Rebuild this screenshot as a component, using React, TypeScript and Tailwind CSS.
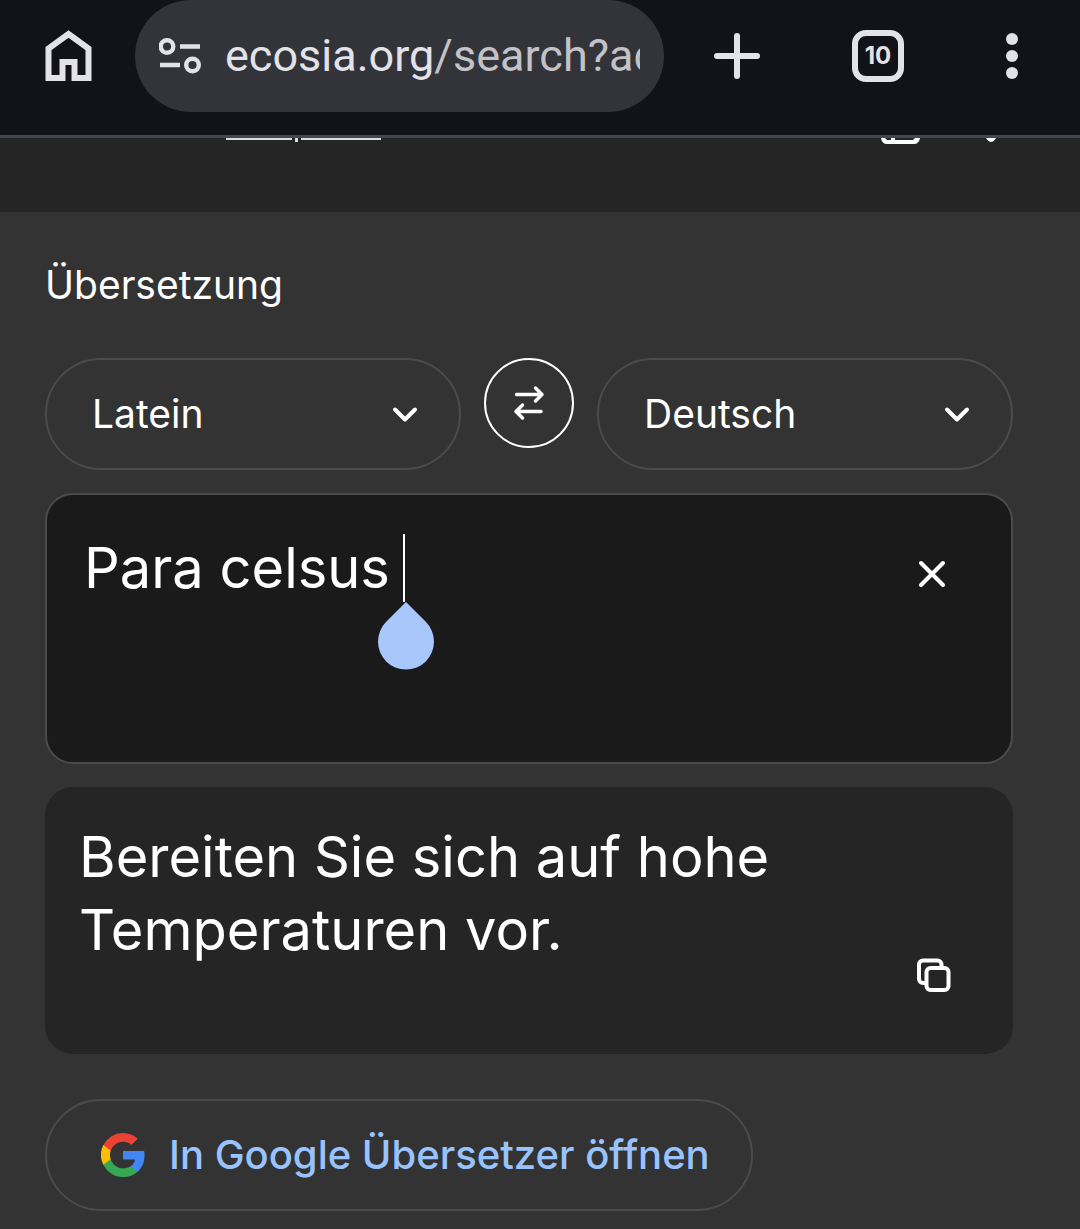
import { ReactNode } from "react";

const LANGUAGES = ["Latein", "Deutsch", "Englisch", "Französisch"];

function LanguageSelect({ id, label, value }: { id: string; label: string; value: string }) {
  return (
    <div className="relative flex-1 min-w-0">
      <label htmlFor={id} className="sr-only">{label}</label>
      <select
        id={id}
        defaultValue={value}
        className="w-full h-28 appearance-none rounded-full border-2 border-[#4b4b4b] bg-transparent pl-[45px] pr-24 text-[39px] text-white"
      >
        {LANGUAGES.map((language) => (
          <option key={language}>{language}</option>
        ))}
      </select>
      <svg className="pointer-events-none absolute right-10 top-10 size-8" viewBox="0 0 32 32" fill="none" stroke="white" strokeWidth="4" strokeLinecap="round" strokeLinejoin="round">
        <path d="M6 11.500l10 10L26 11.500" />
      </svg>
    </div>
  );
}

function IconButton({ label, className, children }: { label: string; className: string; children: ReactNode }) {
  return (
    <button type="button" aria-label={label} className={className}>
      {children}
    </button>
  );
}

function BrowserBar() {
  return (
    <header className="flex items-start border-b-3 border-[#46464f] bg-[#121318] pb-[23px] text-[#e3e2e9]">
      <div className="flex h-28 w-[135px] shrink-0 items-center justify-center">
        <IconButton label="Startseite" className="size-16">
          <svg viewBox="0 0 64 64" className="size-16" fill="none" stroke="currentColor" strokeWidth="6">
            <path d="M12.500 54V24.500L32.500 10L52.500 24.500V54H38.500V38H26.500V54Z" />
          </svg>
        </IconButton>
      </div>
      <div className="flex h-28 min-w-0 flex-1 items-center gap-6 rounded-full bg-[#33343a] px-6">
        <svg viewBox="0 0 42 36" className="h-9 w-[42px] shrink-0" fill="none" stroke="currentColor" strokeWidth="4.400">
          <circle cx="8" cy="8.500" r="6.300" />
          <path d="M21 8.500h20M1 27h20" />
          <circle cx="33.500" cy="27" r="6.300" />
        </svg>
        <p className="min-w-0 flex-1 overflow-hidden whitespace-nowrap font-['Roboto',sans-serif] text-[45px] leading-[64px]">
          ecosia.org<span className="text-[#c2c2c7]">/search?ad</span>
        </p>
      </div>
      <div className="flex h-28 w-[416px] shrink-0 items-center">
        <IconButton label="Neuer Tab" className="ml-12 size-[50px]">
          <svg viewBox="0 0 50 50" className="size-[50px]" stroke="currentColor" strokeWidth="6" strokeLinecap="round">
            <path d="M25 5v40M5 25h40" />
          </svg>
        </IconButton>
        <IconButton label="Tabs" className="ml-[90px] flex size-[52px] items-center justify-center rounded-[14px] border-6 border-current text-[24px] font-bold">
          10
        </IconButton>
        <IconButton label="Mehr" className="ml-[83px] size-[50px]">
          <svg viewBox="0 0 50 50" className="size-[50px]" fill="currentColor">
            <circle cx="25" cy="8" r="6" />
            <circle cx="25" cy="25" r="6" />
            <circle cx="25" cy="42" r="6" />
          </svg>
        </IconButton>
      </div>
    </header>
  );
}

// bottom edge of the page header that is scrolled away under the browser bar
function ScrolledHeader() {
  return (
    <div className="flex h-[74px] items-start justify-between bg-[#252525] pl-[226px] pr-[83px]">
      <svg viewBox="0 0 155 6" className="h-1.5 w-[155px]" fill="#dcdcdc">
        <path d="M0 0h66v2H0zM69 0h3v4h-3zM75 0h80v2H75z" />
      </svg>
      <svg viewBox="0 0 116 6" className="h-1.5 w-[116px]" fill="white">
        <path d="M0 0h4l2 2h4V0h4v2h18l2-2h5q-1 6-6 6H6Q1 6 0 0z" />
        <path d="M105 0h10q-5 8-10 0z" />
      </svg>
    </div>
  );
}

export default function App() {
  return (
    <div className="min-h-screen bg-[#333333] font-['Inter',sans-serif] text-white">
      <BrowserBar />
      <ScrolledHeader />
      <main className="pb-[18px] pl-[45px] pr-[67px] pt-[45px]">
        <h1 className="text-[39px] leading-[56px]">Übersetzung</h1>
        <div className="mt-[45px] flex items-start gap-[23px]">
          <LanguageSelect id="from" label="Ausgangssprache" value="Latein" />
          <IconButton label="Sprachen tauschen" className="flex size-[90px] shrink-0 items-center justify-center rounded-full border-2 border-white">
            <svg viewBox="0 0 36 36" className="size-9" fill="none" stroke="white" strokeWidth="3.500" strokeLinecap="round" strokeLinejoin="round">
              <path d="M5.500 9.500H31M24.500 3l6.500 6.500l-6.500 6.500M30 26.500H5M11.500 20L5 26.500l6.500 6.500" />
            </svg>
          </IconButton>
          <LanguageSelect id="to" label="Zielsprache" value="Deutsch" />
        </div>
        <div className="relative mt-[23px]">
          <label htmlFor="source" className="sr-only">Text eingeben</label>
          <textarea
            id="source"
            defaultValue="Para celsus "
            className="block h-[271px] w-full resize-none rounded-[28px] border-2 border-[#4b4b4b] bg-[#1a1a1a] pb-9 pl-[37px] pr-32 pt-[37px] text-[56px] leading-[73px]"
          />
          {/* caret and its drag handle */}
          <div className="pointer-events-none absolute left-[358px] top-[41px] h-[68px] w-0.5 bg-white" />
          <svg viewBox="0 0 56 68" className="pointer-events-none absolute left-[333px] top-[109px] h-[68px] w-14" fill="#a8c7fa">
            <path d="M28 0L8.200 19.800A28 28 0 1 0 47.800 19.800Z" />
          </svg>
          <IconButton label="Text löschen" className="absolute right-16 top-16 size-[34px]">
            <svg viewBox="0 0 34 34" className="size-[34px]" stroke="white" strokeWidth="4" strokeLinecap="round">
              <path d="M6 6l22 22M28 6L6 28" />
            </svg>
          </IconButton>
        </div>
        <div className="mt-[23px] flex min-h-[267px] items-end rounded-[28px] bg-[#252525] pb-[60px] pl-[34px] pr-[61px] pt-[34px]">
          <p className="flex-1 self-start text-[56px] leading-[73px]">
            Bereiten Sie sich auf hohe Temperaturen vor.
          </p>
          <IconButton label="Kopieren" className="size-9">
            <svg viewBox="0 0 36 36" className="size-9" fill="none" stroke="white" strokeWidth="4" strokeLinejoin="round">
              <rect x="10.500" y="10" width="22" height="22" rx="4" />
              <path d="M10 25H7a4 4 0 0 1-4-4V6.500a4 4 0 0 1 4-4h14.500a4 4 0 0 1 4 4V10" />
            </svg>
          </IconButton>
        </div>
        <a href="#translate" className="mt-[45px] inline-flex h-28 items-center gap-6 rounded-full border-2 border-[#4b4b4b] pl-[54px] pr-[41px] text-[40px] font-medium text-[#99c3ff]">
          <svg viewBox="0 0 48 48" className="size-11">
            <path fill="#4285F4" d="M47.500 24.550c0-1.700-.15-3.330-.43-4.900H24v9.280h13.190a11.270 11.270 0 0 1-4.890 7.400v6.020h7.750c4.530-4.170 7.450-10.320 7.450-17.800z" />
            <path fill="#34A853" d="M24 48c6.480 0 11.930-2.150 15.900-5.820l-7.750-6.020c-2.150 1.440-4.900 2.290-8.150 2.290-6.260 0-11.560-4.230-13.450-9.910H2.540v6.210A24 24 0 0 0 24 48z" />
            <path fill="#FBBC05" d="M10.550 28.540a14.400 14.400 0 0 1 0-9.120v-6.210H2.540a24 24 0 0 0 0 21.540z" />
            <path fill="#EA4335" d="M24 9.550c3.520 0 6.690 1.210 9.180 3.590l6.880-6.880C35.920 2.380 30.480 0 24 0A24 24 0 0 0 2.540 13.210l8.010 6.210C12.440 13.780 17.740 9.550 24 9.550z" />
          </svg>
          In Google Übersetzer öffnen
        </a>
      </main>
    </div>
  );
}
